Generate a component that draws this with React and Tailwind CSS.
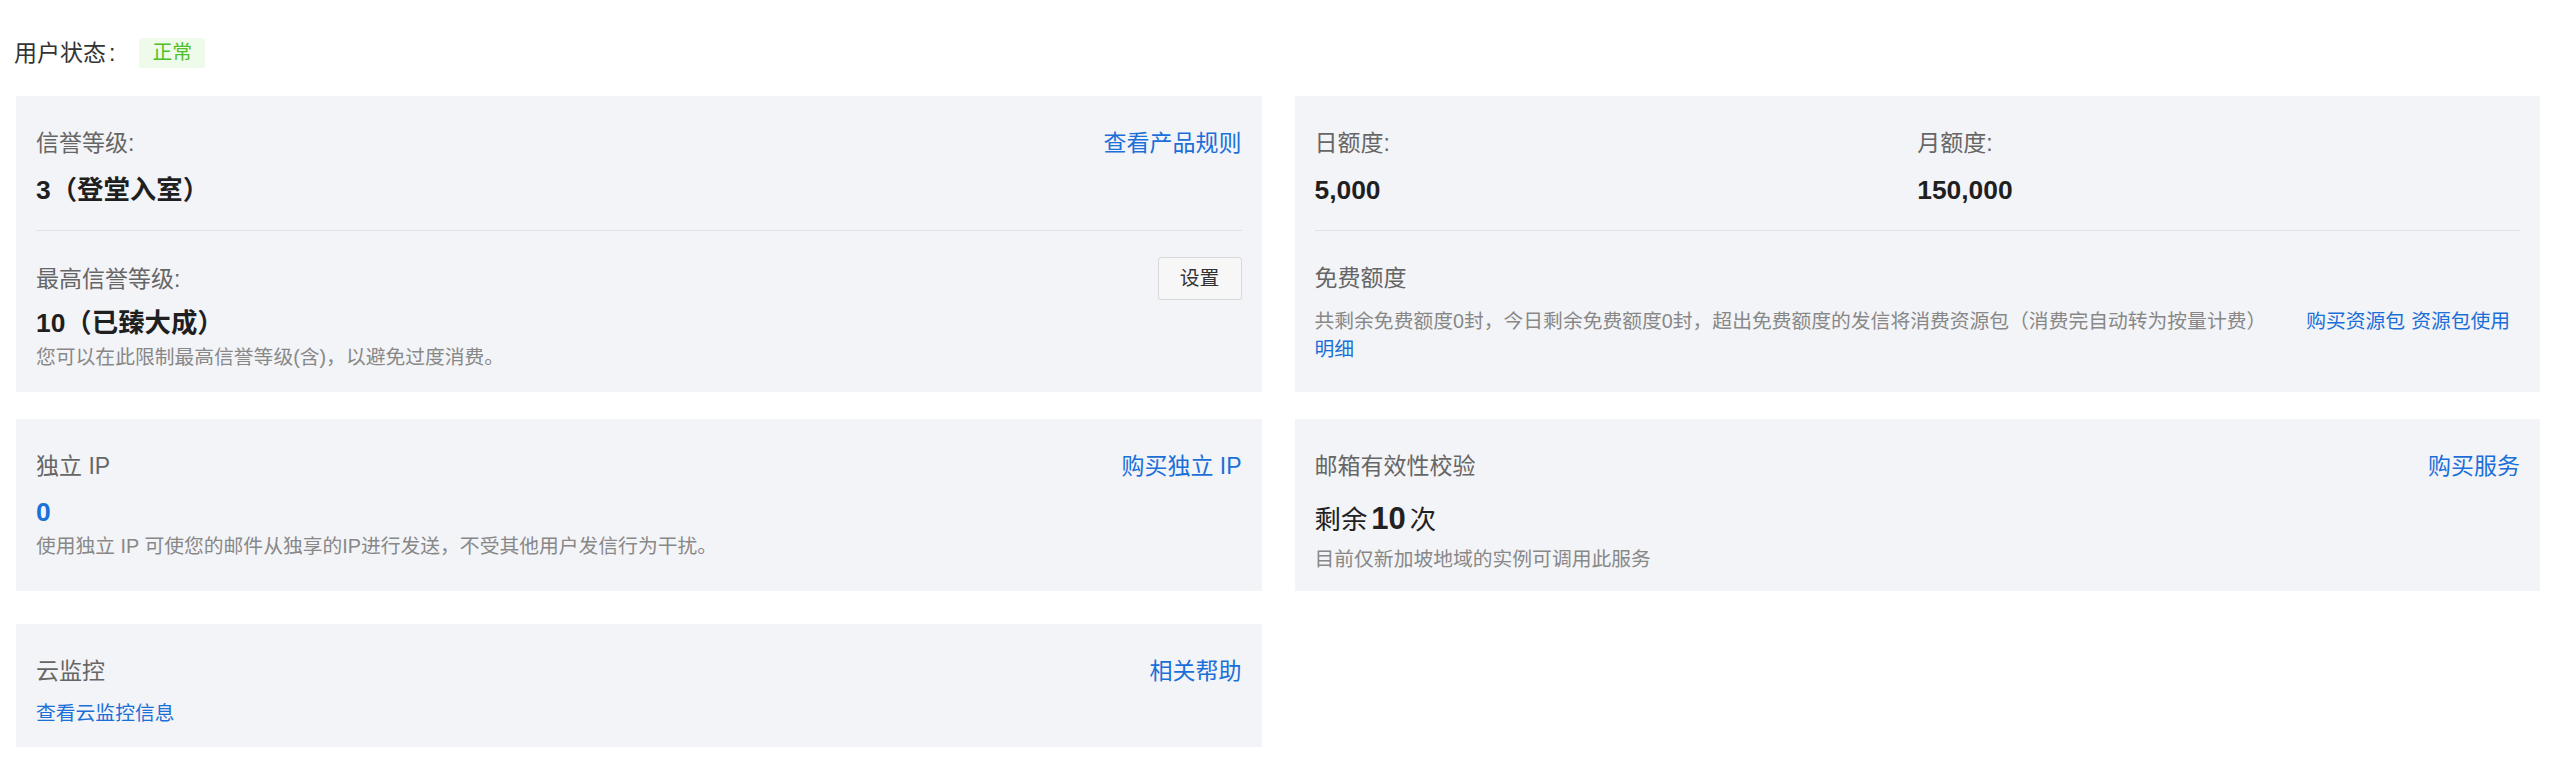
import React from "react";

const LINK = "text-[#1a6fd8]";

function Card({ children, className = "" }) {
  return (
    <div className={`bg-[#f3f4f7] px-5 pt-[31px] ${className}`}>{children}</div>
  );
}

function TitleRow({ title, right }) {
  return (
    <div className="flex items-center justify-between">
      <div className="text-[23px] leading-[32px] text-[#666666]">{title}</div>
      {right}
    </div>
  );
}

function RightLink({ children }) {
  return (
    <a className={`text-[23px] leading-[32px] ${LINK} cursor-pointer`}>{children}</a>
  );
}

export default function App() {
  return (
    <div className="w-[2560px] h-[776px] bg-white font-[family-name:'Liberation_Sans','Noto_Sans_CJK_SC',sans-serif] text-[#1f1f1f]">
      <div className="pt-[38px] pl-[14px]">
        <div className="flex h-[30px] items-center">
          <span className="text-[23px] leading-[30px] text-[#333333]">用户状态</span>
          <span className="ml-[3px] text-[23px] leading-[30px] text-[#333333]">:</span>
          <span className="ml-[24px] flex h-[30px] items-center rounded-[3px] bg-[#effbea] px-[13px] text-[19.8px] text-[#4fbf2a]">
            正常
          </span>
        </div>
      </div>

      <div className="mt-[28px] flex flex-col pl-4 pr-5">
        {/* Row 1 */}
        <div className="grid grid-cols-2 gap-x-[33px]">
          <Card className="pb-[21px]">
            <TitleRow title="信誉等级:" right={<RightLink>查看产品规则</RightLink>} />
            <div className="mt-[13px] text-[26.4px] font-semibold leading-[36px]">3（登堂入室）</div>
            <div className="mt-[22px] h-px bg-[#dfe1e6]" />
            <div className="mt-[26px] flex items-center justify-between">
              <div className="text-[23px] leading-[32px] text-[#666666]">最高信誉等级:</div>
              <button className="flex h-[43px] w-[84px] items-center justify-center rounded-[3px] border border-[#d6d8dc] bg-[#f7f7f8] text-[19.8px] text-[#333333]">
                设置
              </button>
            </div>
            <div className="mt-[5px] text-[26.4px] font-semibold leading-[36px]">10（已臻大成）</div>
            <div className="mt-[2px] text-[19.8px] leading-[28px] text-[#888888]">
              您可以在此限制最高信誉等级(含)，以避免过度消费。
            </div>
          </Card>

          <Card>
            <div className="grid grid-cols-2">
              <div>
                <div className="text-[23px] leading-[32px] text-[#666666]">日额度:</div>
                <div className="mt-[13px] text-[26.4px] font-semibold leading-[36px]">5,000</div>
              </div>
              <div>
                <div className="text-[23px] leading-[32px] text-[#666666]">月额度:</div>
                <div className="mt-[13px] text-[26.4px] font-semibold leading-[36px]">150,000</div>
              </div>
            </div>
            <div className="mt-[22px] h-px bg-[#dfe1e6]" />
            <div className="mt-[31px] text-[23px] leading-[32px] text-[#666666]">免费额度</div>
            <div className="mt-[13px] text-[19.8px] leading-[28px]">
              <div className="flex">
                <span className="text-[#888888]">
                  共剩余免费额度0封，今日剩余免费额度0封，超出免费额度的发信将消费资源包（消费完自动转为按量计费）
                </span>
                <a className={`ml-[40px] ${LINK} cursor-pointer`}>购买资源包</a>
                <a className={`ml-[6px] ${LINK} cursor-pointer`}>资源包使用</a>
              </div>
              <a className={`block ${LINK} cursor-pointer`}>明细</a>
            </div>
          </Card>
        </div>

        {/* Row 2 */}
        <div className="mt-[27px] grid grid-cols-2 gap-x-[33px]">
          <Card>
            <TitleRow title="独立 IP" right={<RightLink>购买独立 IP</RightLink>} />
            <div className={`mt-[12px] text-[26.4px] font-semibold leading-[36px] ${LINK}`}>0</div>
            <div className="mt-[2px] text-[19.8px] leading-[28px] text-[#888888]">
              使用独立 IP 可使您的邮件从独享的IP进行发送，不受其他用户发信行为干扰。
            </div>
          </Card>

          <Card className="pb-[18px]">
            <TitleRow title="邮箱有效性校验" right={<RightLink>购买服务</RightLink>} />
            <div className="mt-[17px] flex items-baseline leading-[40px] text-[#222222]">
              <span className="text-[26.4px]">剩余</span>
              <span className="mx-[4px] text-[31px] font-bold">10</span>
              <span className="text-[26.4px]">次</span>
            </div>
            <div className="mt-[5px] text-[19.8px] leading-[28px] text-[#888888]">
              目前仅新加坡地域的实例可调用此服务
            </div>
          </Card>
        </div>

        {/* Row 3 */}
        <div className="mt-[33px] grid grid-cols-2 gap-x-[33px]">
          <Card className="pb-[20px]">
            <TitleRow title="云监控" right={<RightLink>相关帮助</RightLink>} />
            <a className={`mt-[12px] block text-[19.8px] leading-[28px] ${LINK} cursor-pointer`}>
              查看云监控信息
            </a>
          </Card>
          <div />
        </div>
      </div>
    </div>
  );
}
